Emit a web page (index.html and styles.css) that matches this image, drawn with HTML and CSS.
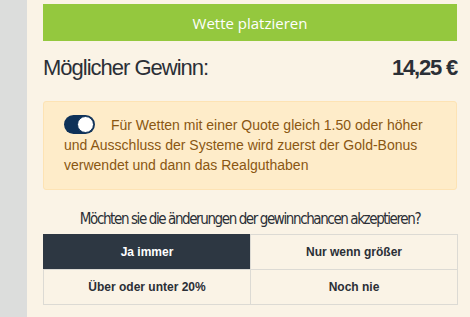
FILE: index.html
```html
<!DOCTYPE html>
<html lang="de">
<head>
    <meta charset="UTF-8">
    <meta name="viewport" content="width=device-width, initial-scale=1.0">
    <title>Wettschein</title>
    <link rel="stylesheet" href="styles.css">
</head>
<body>
<div class="page">
    <div class="sidebar"></div>
    <div class="slip">
        <button class="place-bet">Wette platzieren</button>
        <div class="win-row">
            <span class="win-label">Möglicher Gewinn:</span>
            <span class="win-value">14,25 €</span>
        </div>
        <div class="bonus-box">
            <span class="toggle"><span class="knob"></span></span>
            Für Wetten mit einer Quote gleich 1.50 oder höher und Ausschluss der Systeme wird zuerst der Gold-Bonus verwendet und dann das Realguthaben
        </div>
        <p class="question">Möchten sie die änderungen der gewinnchancen akzeptieren?</p>
        <div class="choices">
            <div class="choice active">Ja immer</div>
            <div class="choice">Nur wenn größer</div>
            <div class="choice">Über oder unter 20%</div>
            <div class="choice">Noch nie</div>
        </div>
    </div>
</div>
</body>
</html>
```

FILE: styles.css
```css
body {
    margin: 0;
    padding: 0;
    font-family: "Liberation Sans", Arial, sans-serif;
    background-color: #faf3e6;
}
.page {
    display: flex;
    min-height: 317px;
}
.sidebar {
    width: 27px;
    background: #dcdddc;
}
.slip {
    width: 414px;
    padding: 4px 0 0 16px;
}
.place-bet {
    display: block;
    width: 100%;
    height: 37px;
    border: none;
    background: #94c83e;
    color: #fff;
    font-family: "Open Sans", sans-serif;
    font-size: 15px;
    padding: 0;
}
.win-row {
    display: flex;
    justify-content: space-between;
    align-items: center;
    margin-top: 14px;
    color: #2b2f36;
}
.win-label {
    font-size: 22px;
    letter-spacing: -1px;
}
.win-value {
    font-size: 22px;
    font-weight: bold;
    letter-spacing: -1.2px;
}
.bonus-box {
    margin-top: 20px;
    background: #feecc9;
    border: 1px solid #fde3b4;
    border-radius: 3px;
    padding: 13px 20px 14px 20px;
    color: #8a5712;
    font-size: 14px;
    line-height: 20px;
}
.toggle {
    display: inline-block;
    position: relative;
    width: 31px;
    height: 19px;
    border-radius: 10px;
    background: #0e3158;
    vertical-align: -4px;
    margin-right: 12px;
}
.knob {
    position: absolute;
    right: 1px;
    top: 1px;
    width: 17px;
    height: 17px;
    border-radius: 50%;
    background: #fff;
    border: 1.5px solid #0e3158;
    box-sizing: border-box;
}
.question {
    margin: 20px 0 0 0;
    text-align: center;
    white-space: nowrap;
    font-family: "DejaVu Sans", sans-serif;
    font-stretch: condensed;
    font-size: 15px;
    letter-spacing: -1.4px;
    color: #2b2f36;
}
.choices {
    display: grid;
    grid-template-columns: 207px 207px;
    margin-top: 6px;
}
.choice {
    height: 34px;
    line-height: 34px;
    text-align: center;
    font-size: 12px;
    font-weight: bold;
    color: #2b2f36;
    border: 1px solid #dcdad4;
    margin: 0 -1px -1px 0;
}
.choice.active {
    background: #2d3742;
    border-color: #2d3742;
    color: #fff;
}
```
